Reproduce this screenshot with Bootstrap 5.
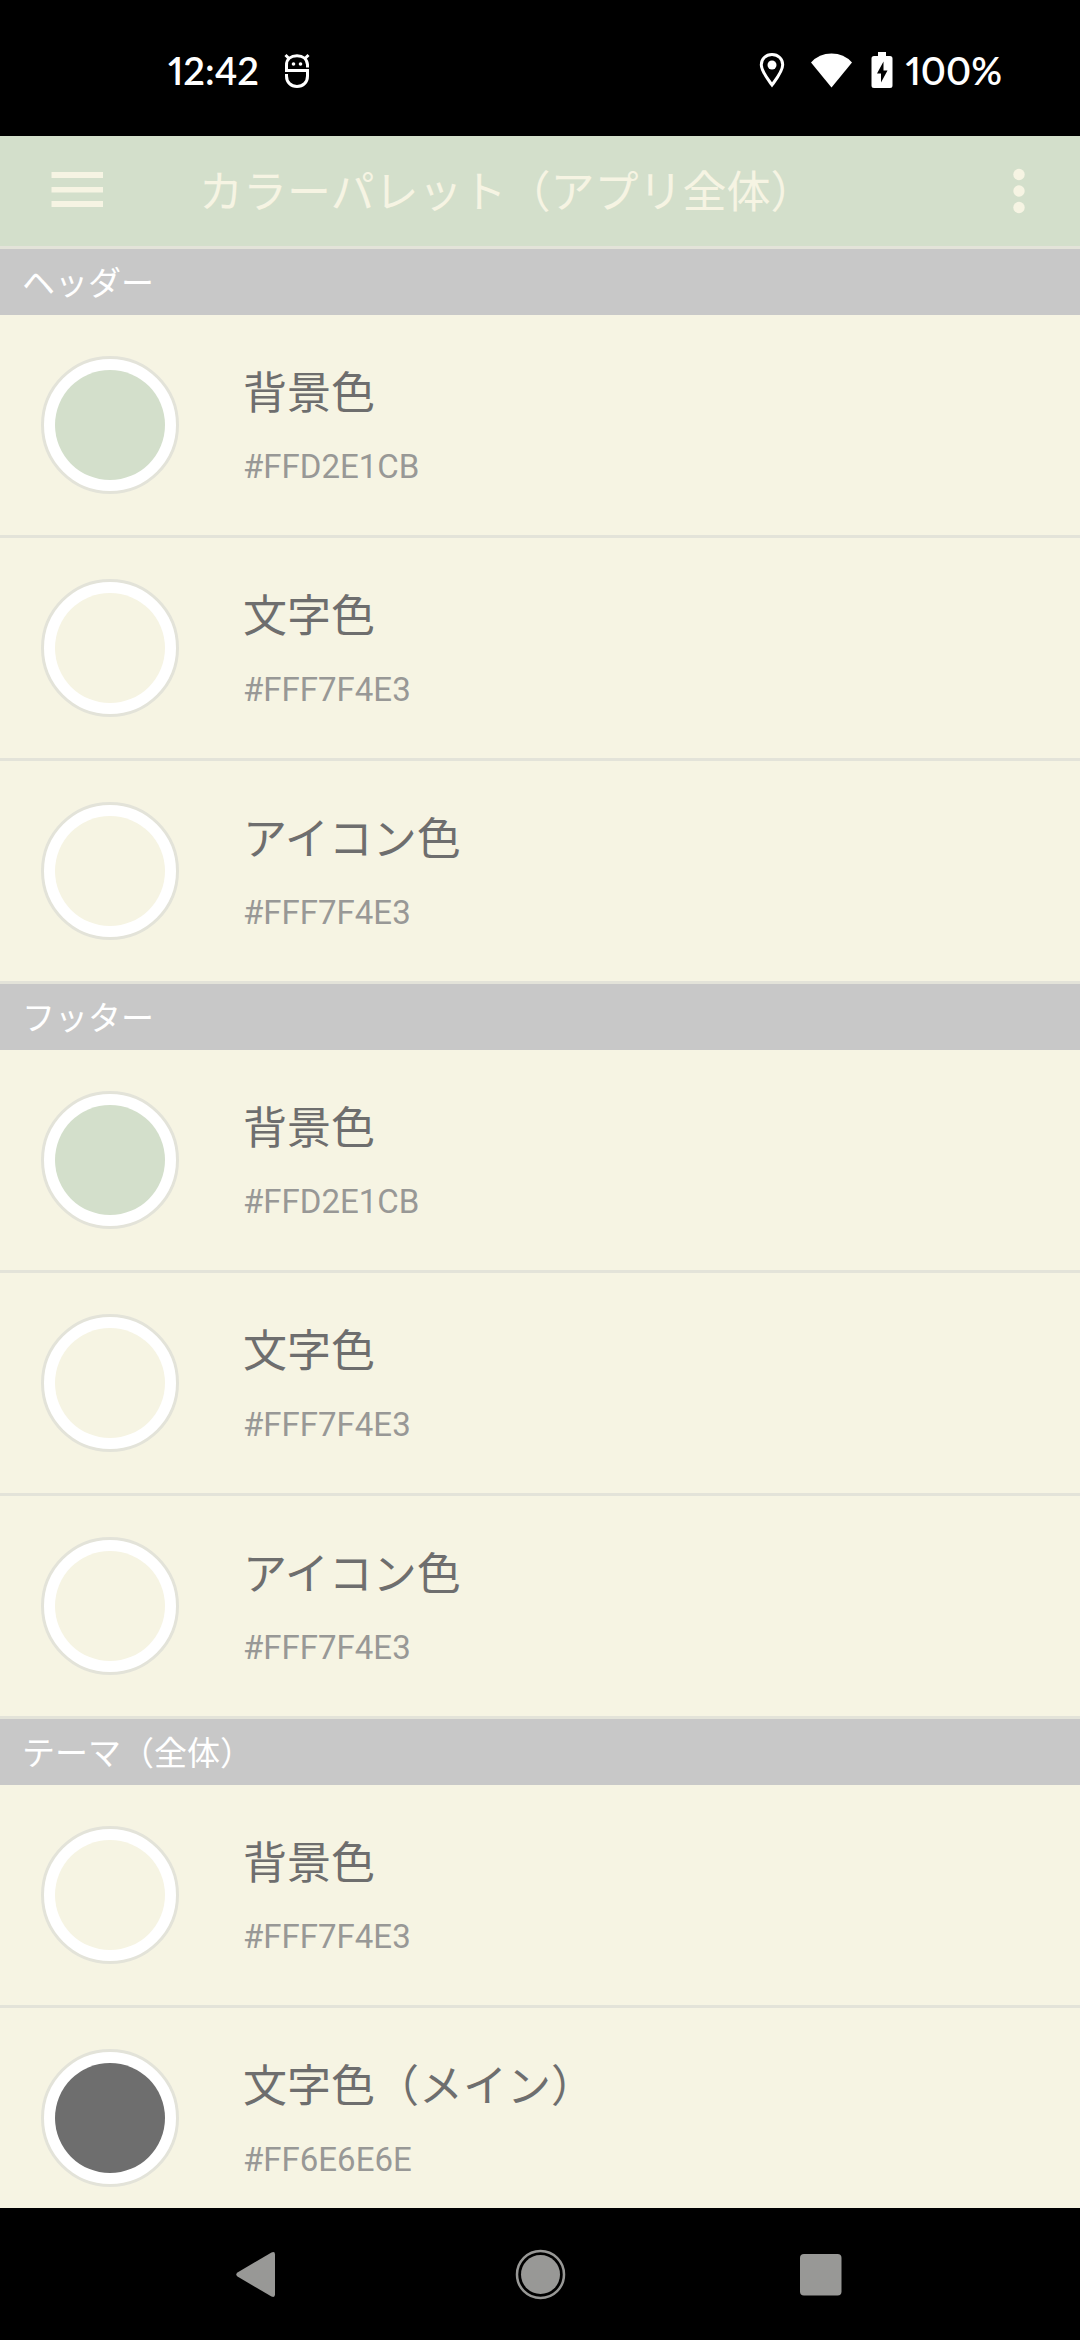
<!DOCTYPE html>
<html lang="ja">
<head>
<meta charset="utf-8">
<meta name="viewport" content="width=device-width, initial-scale=1">
<title>カラーパレット（アプリ全体）</title>
<link href="https://cdn.jsdelivr.net/npm/bootstrap@5.3.0/dist/css/bootstrap.min.css" rel="stylesheet">
<style>
  :root {
    --header: #d3dfcb;
    --cream: #f6f4e3;
    --rule: #e3e3d9;
    --section: #c8c8c8;
    --ink: #6e6e6e;
    --ink-soft: #989896;
  }
  body { font-family: Roboto, "Noto Sans CJK JP", sans-serif; background: var(--cream); color: var(--ink); }
  svg { display: block; }
  .status { height: 136px; padding: 4px 78px 0 168px; font: 600 38px/48px Lato, sans-serif; font-variant-numeric: proportional-nums; }
  .battery { margin-right: 12px; }
  .app-header { height: 113px; border-bottom: 3px solid var(--rule); background: var(--header); color: var(--cream); padding: 0 33px; }
  .icon-btn { width: 88px; height: 88px; color: inherit; }
  .app-title { font-size: 44px; line-height: 64px; padding: 3px 0 0 78px; }
  .section-title { height: 66px; padding: 3px 22px 0; background: var(--section); font-size: 33px; line-height: 48px; }
  .color-row.list-group-item { height: 223px; padding: 0 41px; gap: 64px; background: var(--cream); border: 0; border-bottom: 3px solid var(--rule); color: var(--ink); }
  .swatch { width: 138px; height: 138px; border: 3px solid var(--rule); background: #fff; padding: 11px; }
  .swatch-fill { background: var(--cream); }
  .fill-green { background: var(--header); }
  .fill-gray { background: var(--ink); }
  .color-name { font-size: 44px; line-height: 64px; padding-top: 3px; }
  .color-code { font-size: 33px; line-height: 48px; margin-top: 17px; color: var(--ink-soft); }
  .nav-keys { height: 132px; padding: 0 117px; }
  .nav-keys button { color: #989896; }
</style>
</head>
<body>
<div class="vh-100 d-flex flex-column overflow-hidden">
  <div class="status bg-black text-white d-flex align-items-center flex-shrink-0">
    <span>12:42</span>
    <svg class="ms-4" width="28" height="38" viewBox="0 0 28 38" fill="none" stroke="#fff" stroke-width="3" aria-hidden="true">
      <path d="M2.500 4 6 7.500M25.500 4 22 7.500" />
      <path d="M24.500 16.500V13.500C24 8 20 4.800 14 4.800S3.500 8 3.500 14V19.500H24.500V25C24.500 31.500 20 35.500 14 35.500S3.500 31.500 3.500 25V23" />
      <circle cx="10.500" cy="13" r="1.800" fill="#fff" stroke="none" />
      <circle cx="17.500" cy="13" r="1.800" fill="#fff" stroke="none" />
    </svg>
    <div class="ms-auto d-flex align-items-center">
      <svg width="26" height="36" viewBox="0 0 26 36" aria-hidden="true">
        <path d="M13 2.500C6.700 2.500 2.300 7 2.300 12.700C2.300 19 8 26 13 33C18 26 23.700 19 23.700 12.700C23.700 7 19.300 2.500 13 2.500Z" fill="none" stroke="#fff" stroke-width="3" />
        <circle cx="13" cy="13" r="4.500" fill="#fff" />
      </svg>
      <svg class="mx-3" width="54" height="36" viewBox="0 0 54 36" aria-hidden="true">
        <path d="M10 10.500Q18 1.500 30.500 1.500T51 10.500L30.500 35.500Z" fill="#fff" />
      </svg>
      <svg class="battery" width="22" height="36" viewBox="0 0 22 36" aria-hidden="true">
        <path d="M7 0H15V4H19Q21.500 4 21.500 6.500V33.500Q21.500 36 19 36H3Q.5 36 .5 33.500V6.500Q.5 4 3 4H7Z" fill="#fff" />
        <path d="M12.500 9.500 6 21.500H10V30.500L16.500 18.500H12.500Z" fill="#000" />
      </svg>
      <span>100%</span>
    </div>
  </div>

  <header class="app-header d-flex align-items-center flex-shrink-0">
    <button type="button" class="icon-btn btn border-0 p-0" aria-label="メニュー">
      <svg width="88" height="88" viewBox="0 0 88 88" fill="currentColor"><path d="M18.500 25H70V31H18.500ZM18.500 40H70V45.500H18.500ZM18.500 54H70V60H18.500Z" /></svg>
    </button>
    <h1 class="app-title fw-normal m-0">カラーパレット（アプリ全体）</h1>
    <button type="button" class="icon-btn btn border-0 p-0 ms-auto" aria-label="その他">
      <svg width="88" height="88" viewBox="0 0 88 88" fill="currentColor"><circle cx="60" cy="27.500" r="5.700" /><circle cx="60" cy="44" r="5.700" /><circle cx="60" cy="60.500" r="5.700" /></svg>
    </button>
  </header>

  <main class="flex-grow-1 overflow-hidden">
    <section>
      <h2 class="section-title d-flex align-items-center text-white fw-normal m-0">ヘッダー</h2>
      <div class="list-group rounded-0">
        <button type="button" class="color-row list-group-item d-flex align-items-center text-start">
          <span class="swatch rounded-circle flex-shrink-0"><span class="swatch-fill fill-green d-block h-100 rounded-circle"></span></span>
          <span><span class="color-name d-block">背景色</span><span class="color-code d-block">#FFD2E1CB</span></span>
        </button>
        <button type="button" class="color-row list-group-item d-flex align-items-center text-start">
          <span class="swatch rounded-circle flex-shrink-0"><span class="swatch-fill d-block h-100 rounded-circle"></span></span>
          <span><span class="color-name d-block">文字色</span><span class="color-code d-block">#FFF7F4E3</span></span>
        </button>
        <button type="button" class="color-row list-group-item d-flex align-items-center text-start">
          <span class="swatch rounded-circle flex-shrink-0"><span class="swatch-fill d-block h-100 rounded-circle"></span></span>
          <span><span class="color-name d-block">アイコン色</span><span class="color-code d-block">#FFF7F4E3</span></span>
        </button>
      </div>
    </section>
    <section>
      <h2 class="section-title d-flex align-items-center text-white fw-normal m-0">フッター</h2>
      <div class="list-group rounded-0">
        <button type="button" class="color-row list-group-item d-flex align-items-center text-start">
          <span class="swatch rounded-circle flex-shrink-0"><span class="swatch-fill fill-green d-block h-100 rounded-circle"></span></span>
          <span><span class="color-name d-block">背景色</span><span class="color-code d-block">#FFD2E1CB</span></span>
        </button>
        <button type="button" class="color-row list-group-item d-flex align-items-center text-start">
          <span class="swatch rounded-circle flex-shrink-0"><span class="swatch-fill d-block h-100 rounded-circle"></span></span>
          <span><span class="color-name d-block">文字色</span><span class="color-code d-block">#FFF7F4E3</span></span>
        </button>
        <button type="button" class="color-row list-group-item d-flex align-items-center text-start">
          <span class="swatch rounded-circle flex-shrink-0"><span class="swatch-fill d-block h-100 rounded-circle"></span></span>
          <span><span class="color-name d-block">アイコン色</span><span class="color-code d-block">#FFF7F4E3</span></span>
        </button>
      </div>
    </section>
    <section>
      <h2 class="section-title d-flex align-items-center text-white fw-normal m-0">テーマ（全体）</h2>
      <div class="list-group rounded-0">
        <button type="button" class="color-row list-group-item d-flex align-items-center text-start">
          <span class="swatch rounded-circle flex-shrink-0"><span class="swatch-fill d-block h-100 rounded-circle"></span></span>
          <span><span class="color-name d-block">背景色</span><span class="color-code d-block">#FFF7F4E3</span></span>
        </button>
        <button type="button" class="color-row list-group-item d-flex align-items-center text-start">
          <span class="swatch rounded-circle flex-shrink-0"><span class="swatch-fill fill-gray d-block h-100 rounded-circle"></span></span>
          <span><span class="color-name d-block">文字色（メイン）</span><span class="color-code d-block">#FF6E6E6E</span></span>
        </button>
      </div>
    </section>
  </main>

  <nav class="nav-keys bg-black d-flex flex-shrink-0" aria-label="ナビゲーション">
    <button type="button" class="btn border-0 p-0 col-4 d-flex align-items-center justify-content-center" aria-label="戻る">
      <svg width="52" height="52" viewBox="0 0 52 52" fill="currentColor"><path d="M5.500 24.500 39.500 4.500Q43 3 43 6.500V46.500Q43 50 39.500 48.500L5.500 28.500Q3 26.500 5.500 24.500Z" /></svg>
    </button>
    <button type="button" class="btn border-0 p-0 col-4 d-flex align-items-center justify-content-center" aria-label="ホーム">
      <svg width="52" height="52" viewBox="0 0 52 52" fill="currentColor"><circle cx="26.500" cy="26.500" r="19.500" /><circle cx="26.500" cy="26.500" r="23.500" fill="none" stroke="currentColor" stroke-width="2.500" /></svg>
    </button>
    <button type="button" class="btn border-0 p-0 col-4 d-flex align-items-center justify-content-center" aria-label="最近使ったアプリ">
      <svg width="52" height="52" viewBox="0 0 52 52" fill="currentColor"><rect x="4" y="6" width="41.500" height="41.500" rx="4" /></svg>
    </button>
  </nav>
</div>
<script src="https://cdn.jsdelivr.net/npm/bootstrap@5.3.0/dist/js/bootstrap.bundle.min.js"></script>
</body>
</html>
